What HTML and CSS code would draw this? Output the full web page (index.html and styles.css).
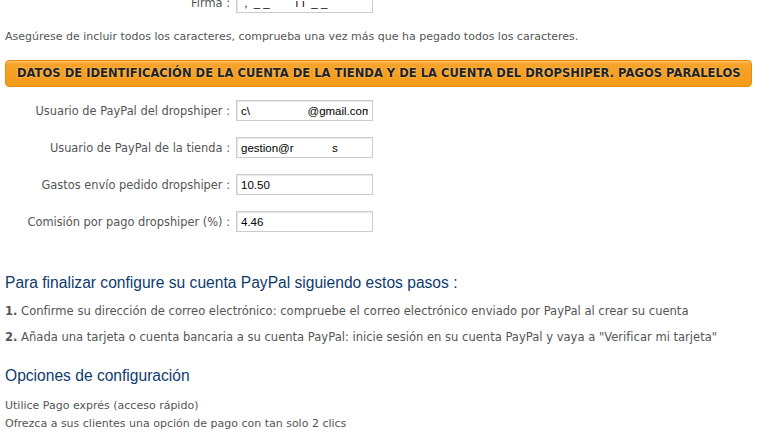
FILE: index.html
```html
<!DOCTYPE html>
<html lang="es">
<head>
    <meta charset="UTF-8">
    <meta name="viewport" content="width=device-width, initial-scale=1.0">
    <title>PayPal dropshiper</title>
    <link rel="stylesheet" href="styles.css">
</head>
<body>
<div class="page">

    <!-- Firma (partially scrolled out) -->
    <div class="field-row firma-row">
        <label class="field-label" for="firma">Firma :</label>
        <input class="field-input" type="text" id="firma" value=" ,  _ _        ı ı  _ _             ,">
    </div>

    <p class="note">Asegúrese de incluir todos los caracteres, comprueba una vez más que ha pegado todos los caracteres.</p>

    <h2 class="section-bar">DATOS DE IDENTIFICACIÓN DE LA CUENTA DE LA TIENDA Y DE LA CUENTA DEL DROPSHIPER. PAGOS PARALELOS</h2>

    <div class="fields">
        <div class="field-row">
            <label class="field-label" for="dropUser">Usuario de PayPal del dropshiper :</label>
            <input class="field-input" type="text" id="dropUser" value="c\                  @gmail.com">
        </div>
        <div class="field-row">
            <label class="field-label" for="shopUser">Usuario de PayPal de la tienda :</label>
            <input class="field-input" type="text" id="shopUser" value="gestion@r            s">
        </div>
        <div class="field-row">
            <label class="field-label" for="shipCost">Gastos envío pedido dropshiper :</label>
            <input class="field-input" type="text" id="shipCost" value="10.50">
        </div>
        <div class="field-row">
            <label class="field-label" for="fee">Comisión por pago dropshiper (%) :</label>
            <input class="field-input" type="text" id="fee" value="4.46">
        </div>
    </div>

    <h3 class="step-title">Para finalizar configure su cuenta PayPal siguiendo estos pasos :</h3>
    <p class="step"><b>1.</b> Confirme su dirección de correo electrónico: compruebe el correo electrónico enviado por PayPal al crear su cuenta</p>
    <p class="step"><b>2.</b> Añada una tarjeta o cuenta bancaria a su cuenta PayPal: inicie sesión en su cuenta PayPal y vaya a "Verificar mi tarjeta"</p>

    <h3 class="step-title options-title">Opciones de configuración</h3>
    <p class="option">Utilice Pago exprés (acceso rápido)</p>
    <p class="option option-sub">Ofrezca a sus clientes una opción de pago con tan solo 2 clics</p>

</div>
</body>
</html>
```

FILE: styles.css
```css
body {
    margin: 0;
    background-color: #ffffff;
    font-family: "DejaVu Sans", Verdana, sans-serif;
    font-size: 11px;
    color: #555555;
    overflow: hidden;
}

.page {
    padding: 0 21px 0 5px;
}

.field-row {
    display: grid;
    grid-template-columns: 225px 137px;
    column-gap: 6px;
    align-items: center;
}

.firma-row {
    margin-top: -8px;
}

.field-label {
    text-align: right;
    font-size: 11.4px;
    color: #555555;
}

.field-input {
    box-sizing: border-box;
    width: 137px;
    height: 21px;
    margin: 0;
    padding: 0 4px;
    border: 1px solid #cccccc;
    box-shadow: inset 1px 1px 1px #e6e6e6;
    font-family: "Liberation Sans", Arial, sans-serif;
    font-size: 11.5px;
    color: #000000;
    background-color: #ffffff;
    outline: none;
}

.note {
    margin: 17px 0 0 0;
    line-height: 14px;
}

.section-bar {
    margin: 16px 0 0 0;
    height: 27px;
    box-sizing: border-box;
    padding-left: 11px;
    border: 1px solid #e98c0c;
    border-radius: 4px;
    background: linear-gradient(to bottom, #fcc36a 0px, #f7a42a 3px, #f39a1a 100%);
    font-size: 11.55px;
    font-weight: bold;
    line-height: 25px;
    color: #222222;
    text-shadow: 0 0 2px #ffd9a0;
    white-space: nowrap;
}

.fields {
    margin-top: 13px;
    display: flex;
    flex-direction: column;
    gap: 16px;
}

.step-title {
    margin: 41px 0 0 0;
    font-family: "Liberation Sans", Arial, sans-serif;
    font-size: 15.6px;
    font-weight: normal;
    line-height: 20px;
    color: #0f3b6c;
}

.step {
    margin: 10px 0 0 0;
    font-size: 11.55px;
    line-height: 16px;
    color: #555555;
}

.step b {
    color: #555555;
}

.step + .step {
    margin-top: 10px;
}

.options-title {
    margin-top: 21px;
}

.option {
    margin: 12px 0 0 0;
    line-height: 16px;
}

.option-sub {
    margin-top: 2px;
}
```
